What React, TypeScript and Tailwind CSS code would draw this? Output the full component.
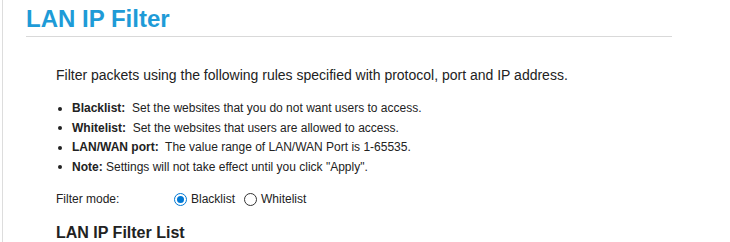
import React from "react";

function Radio({ checked }: { checked: boolean }) {
  return (
    <span
      className={
        "inline-flex h-[13px] w-[13px] items-center justify-center rounded-full border " +
        (checked ? "border-[#0078d4] bg-white" : "border-[#333333] bg-white")
      }
    >
      {checked && <span className="block h-[7px] w-[7px] rounded-full bg-[#0078d4]" />}
    </span>
  );
}

export default function App() {
  return (
    <div className="h-[242px] w-[730px] overflow-hidden bg-white font-['Liberation_Sans',Arial,sans-serif] text-[#222222]">
      <div className="ml-[2px] h-full border-l border-[#dddddd] pl-[23px]">
        <div className="w-[646px] border-b border-[#d9d9d9] pb-[3px] pt-[5px]">
          <h1 className="text-[24px] font-bold leading-[28px] text-[#1e9bd7]">LAN IP Filter</h1>
        </div>
        <div className="pl-[30px]">
          <p className="mt-[29px] text-[14px] leading-[18px]">
            Filter packets using the following rules specified with protocol, port and IP address.
          </p>
          <ul className="mt-[15px] text-[12px] leading-[19.5px]">
            <li className="flex items-center">
              <span className="mr-[10px] ml-[2px] inline-block h-[4px] w-[4px] rounded-full bg-[#222222]" />
              <span><b>Blacklist:</b>&nbsp; Set the websites that you do not want users to access.</span>
            </li>
            <li className="flex items-center">
              <span className="mr-[10px] ml-[2px] inline-block h-[4px] w-[4px] rounded-full bg-[#222222]" />
              <span><b>Whitelist:</b>&nbsp; Set the websites that users are allowed to access.</span>
            </li>
            <li className="flex items-center">
              <span className="mr-[10px] ml-[2px] inline-block h-[4px] w-[4px] rounded-full bg-[#222222]" />
              <span><b>LAN/WAN port:</b>&nbsp; The value range of LAN/WAN Port is 1-65535.</span>
            </li>
            <li className="flex items-center">
              <span className="mr-[10px] ml-[2px] inline-block h-[4px] w-[4px] rounded-full bg-[#222222]" />
              <span><b>Note:</b> Settings will not take effect until you click "Apply".</span>
            </li>
          </ul>
          <div className="mt-[13px] flex items-center text-[12px] leading-[18px]">
            <span className="w-[118px]">Filter mode:</span>
            <label className="flex items-center">
              <Radio checked />
              <span className="ml-[4px]">Blacklist</span>
            </label>
            <label className="ml-[9px] flex items-center">
              <Radio checked={false} />
              <span className="ml-[4px]">Whitelist</span>
            </label>
          </div>
          <h2 className="mt-[15px] text-[16px] font-bold leading-[20px]">LAN IP Filter List</h2>
        </div>
      </div>
    </div>
  );
}
